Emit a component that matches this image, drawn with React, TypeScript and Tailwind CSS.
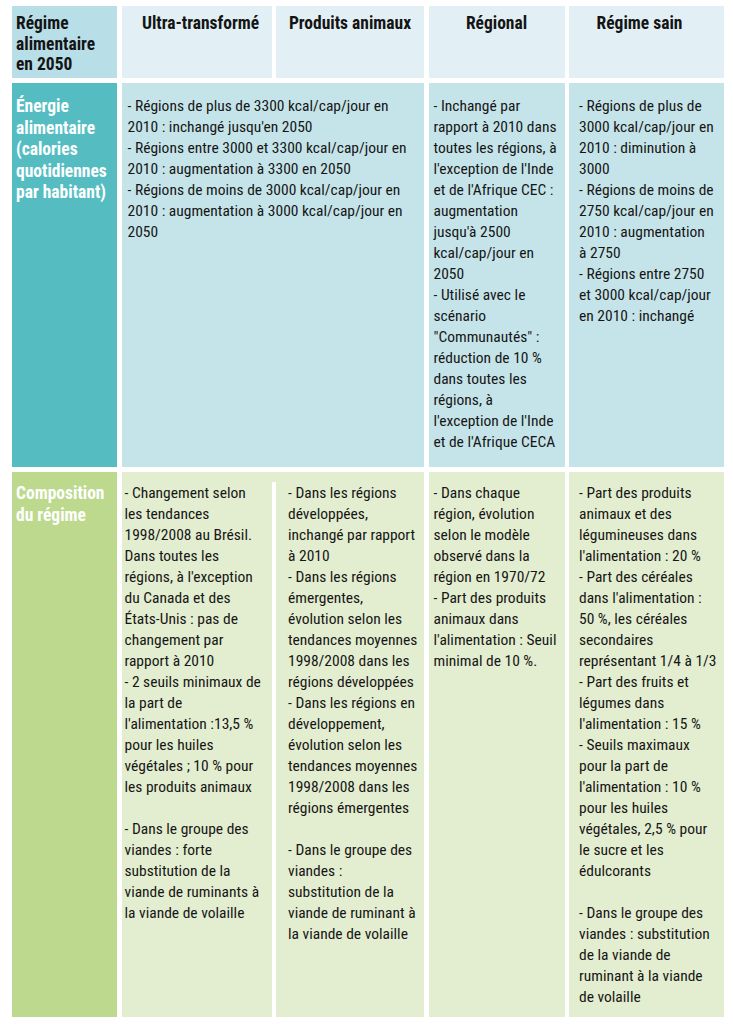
import React from "react";

const L = ({ lines }: { lines: string[] }) => (
  <>
    {lines.map((l, i) => (
      <div key={i} className="whitespace-nowrap h-[21px]">
        {l === "" ? "\u00a0" : l}
      </div>
    ))}
  </>
);

const font = "font-['Roboto',sans-serif] [font-stretch:75%]";
const bold = "font-bold text-[17.5px]";

export default function App() {
  return (
    <div className={`w-[733px] h-[1024px] bg-white pt-[6px] pl-[12px] ${font} text-[#161616]`}>
      <div className="grid grid-cols-[105px_150px_148px_136px_155px] grid-rows-[72px_384px_545px] gap-x-[4.5px] gap-y-[5px] w-[712px] text-[15.5px] leading-[21px]">
        {/* Header row */}
        <div className={`bg-[#b8dee7] pl-[4px] pt-[7px] ${bold} text-[#141414] leading-[20.7px]`}>
          <div>Régime</div>
          <div>alimentaire</div>
          <div>en 2050</div>
        </div>
        <div className={`bg-[#e2f0f5] pt-[7px] pl-[8px] text-center ${bold} leading-[21px] text-[#141414]`}>Ultra-transformé</div>
        <div className={`bg-[#e2f0f5] pt-[7px] text-center ${bold} leading-[21px] text-[#141414]`}>Produits animaux</div>
        <div className={`bg-[#e2f0f5] pt-[7px] text-center ${bold} leading-[21px] text-[#141414]`}>Régional</div>
        <div className={`bg-[#e2f0f5] pt-[7px] pr-[14px] text-center ${bold} leading-[21px] text-[#141414]`}>Régime sain</div>

        {/* Row 2 */}
        <div className={`bg-[#55bdc2] pl-[4px] pt-[13px] ${bold} text-white leading-[21.5px]`}>
          <div>Énergie</div>
          <div>alimentaire</div>
          <div>(calories</div>
          <div>quotidiennes</div>
          <div>par habitant)</div>
        </div>
        <div className="col-span-2 bg-[#c5e4e9] pl-[6px] pt-[13px]">
          <L
            lines={[
              "- Régions de plus de 3300 kcal/cap/jour en",
              "2010 : inchangé jusqu'en 2050",
              "- Régions entre 3000 et 3300 kcal/cap/jour en",
              "2010 : augmentation à 3300 en 2050",
              "- Régions de moins de 3000 kcal/cap/jour en",
              "2010 : augmentation à 3000 kcal/cap/jour en",
              "2050",
            ]}
          />
        </div>
        <div className="bg-[#c5e4e9] pl-[5px] pt-[13px]">
          <L
            lines={[
              "- Inchangé par",
              "rapport à 2010 dans",
              "toutes les régions, à",
              "l'exception de l'Inde",
              "et de l'Afrique CEC :",
              "augmentation",
              "jusqu'à 2500",
              "kcal/cap/jour en",
              "2050",
              "- Utilisé avec le",
              "scénario",
              "\"Communautés\" :",
              "réduction de 10 %",
              "dans toutes les",
              "régions, à",
              "l'exception de l'Inde",
              "et de l'Afrique CECA",
            ]}
          />
        </div>
        <div className="bg-[#c5e4e9] pl-[10px] pt-[13px]">
          <L
            lines={[
              "- Régions de plus de",
              "3000 kcal/cap/jour en",
              "2010 : diminution à",
              "3000",
              "- Régions de moins de",
              "2750 kcal/cap/jour en",
              "2010 : augmentation",
              "à 2750",
              "- Régions entre 2750",
              "et 3000 kcal/cap/jour",
              "en 2010 : inchangé",
            ]}
          />
        </div>

        {/* Row 3 */}
        <div className={`bg-[#bdd98e] pl-[4px] pt-[11px] ${bold} text-white leading-[21.5px]`}>
          <div>Composition</div>
          <div>du régime</div>
        </div>
        <div className="col-span-2 bg-[#e3edcf] flex">
          <div className="w-[150px] shrink-0 pl-[3px] pt-[11px]">
            <L
              lines={[
                "- Changement selon",
                "les tendances",
                "1998/2008 au Brésil.",
                "Dans toutes les",
                "régions, à l'exception",
                "du Canada et des",
                "États-Unis : pas de",
                "changement par",
                "rapport à 2010",
                "- 2 seuils minimaux de",
                "la part de",
                "l'alimentation :13,5 %",
                "pour les huiles",
                "végétales ; 10 % pour",
                "les produits animaux",
                "",
                "- Dans le groupe des",
                "viandes : forte",
                "substitution de la",
                "viande de ruminants à",
                "la viande de volaille",
              ]}
            />
          </div>
          <div className="w-[4.5px] shrink-0 mt-[10px] bg-white" />
          <div className="flex-1 pl-[12px] pt-[11px]">
            <L
              lines={[
                "- Dans les régions",
                "développées,",
                "inchangé par rapport",
                "à 2010",
                "- Dans les régions",
                "émergentes,",
                "évolution selon les",
                "tendances moyennes",
                "1998/2008 dans les",
                "régions développées",
                "- Dans les régions en",
                "développement,",
                "évolution selon les",
                "tendances moyennes",
                "1998/2008 dans les",
                "régions émergentes",
                "",
                "- Dans le groupe des",
                "viandes :",
                "substitution de la",
                "viande de ruminant à",
                "la viande de volaille",
              ]}
            />
          </div>
        </div>
        <div className="bg-[#e3edcf] pl-[5px] pt-[11px]">
          <L
            lines={[
              "- Dans chaque",
              "région, évolution",
              "selon le modèle",
              "observé dans la",
              "région en 1970/72",
              "- Part des produits",
              "animaux dans",
              "l'alimentation : Seuil",
              "minimal de 10 %.",
            ]}
          />
        </div>
        <div className="bg-[#e3edcf] pl-[10px] pt-[11px]">
          <L
            lines={[
              "- Part des produits",
              "animaux et des",
              "légumineuses dans",
              "l'alimentation : 20 %",
              "- Part des céréales",
              "dans l'alimentation :",
              "50 %, les céréales",
              "secondaires",
              "représentant 1/4 à 1/3",
              "- Part des fruits et",
              "légumes dans",
              "l'alimentation : 15 %",
              "- Seuils maximaux",
              "pour la part de",
              "l'alimentation : 10 %",
              "pour les huiles",
              "végétales, 2,5 % pour",
              "le sucre et les",
              "édulcorants",
              "",
              "- Dans le groupe des",
              "viandes : substitution",
              "de la viande de",
              "ruminant à la viande",
              "de volaille",
            ]}
          />
        </div>
      </div>
    </div>
  );
}
